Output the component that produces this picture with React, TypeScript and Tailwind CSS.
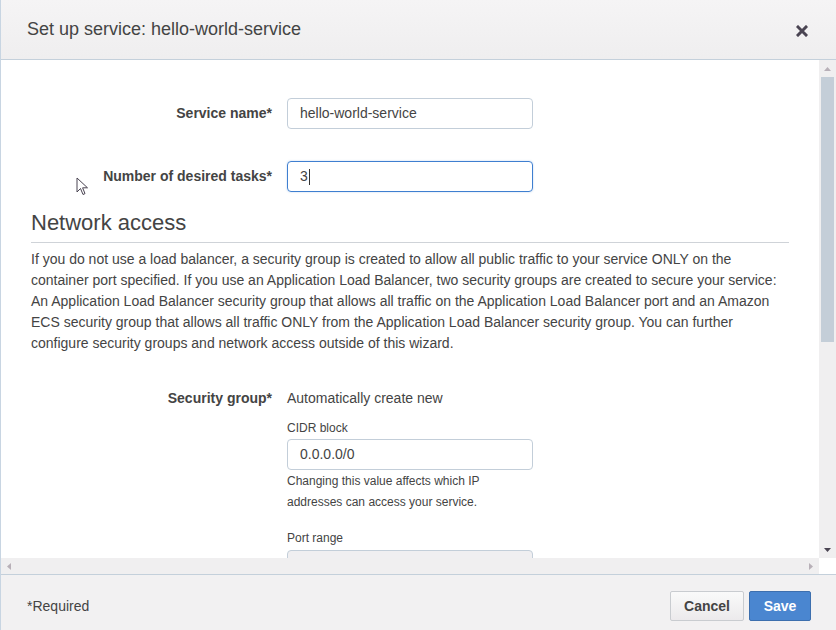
import React from "react";

const font = { fontFamily: '"Liberation Sans", Arial, Helvetica, sans-serif' };

function Label({ children }: { children: React.ReactNode }) {
  return (
    <div className="w-[256px] shrink-0 pr-[15px] text-right text-[14px] font-bold text-[#444]">
      {children}
    </div>
  );
}

export default function App() {
  return (
    <div
      className="w-[836px] h-[630px] flex flex-col bg-white border-l border-[#c8d5e2] overflow-hidden text-[#444]"
      style={font}
    >
      {/* Header */}
      <div className="h-[60px] shrink-0 flex items-center justify-between pl-[26px] pr-[28px] bg-gradient-to-b from-[#f5f4f5] to-[#efeeef] border-b border-[#c4d0db]">
        <div className="text-[18px] text-[#444]">Set up service: hello-world-service</div>
        <svg width="12" height="12" viewBox="0 0 12 12" className="mt-[2px]">
          <path d="M2 2 L10 10 M10 2 L2 10" stroke="#4a4452" strokeWidth="3" strokeLinecap="square" />
        </svg>
      </div>

      {/* Body */}
      <div className="relative h-[514px] shrink-0 flex flex-col">
        <div className="flex h-[498px]">
          <div className="relative flex-1 overflow-hidden pl-[30px] pr-[30px]">
            <div className="flex flex-col">
              <div className="flex items-center mt-[38px]">
                <Label>Service name*</Label>
                <div className="w-[246px] h-[31px] rounded-[4px] border border-[#c3ced9] flex items-center pl-[12px] text-[14px] text-[#444]">
                  hello-world-service
                </div>
              </div>
              <div className="flex items-center mt-[32px]">
                <Label>Number of desired tasks*</Label>
                <div className="w-[246px] h-[31px] rounded-[4px] border border-[#3f7fd0] shadow-[0_0_2px_rgba(63,127,208,0.35)] flex items-center pl-[12px] text-[14px] text-[#444]">
                  3<span className="inline-block w-px h-[16px] bg-[#333] ml-[1px]" />
                </div>
              </div>

              <div className="mt-[18px] text-[22px] leading-[25px] text-[#444]">Network access</div>
              <div className="mt-[7px] h-px bg-[#cfd3d8]" />
              <div className="mt-[6px] text-[14px] leading-[21px] text-[#444]">
                <div className="whitespace-nowrap">If you do not use a load balancer, a security group is created to allow all public traffic to your service ONLY on the</div>
                <div className="whitespace-nowrap">container port specified. If you use an Application Load Balancer, two security groups are created to secure your service:</div>
                <div className="whitespace-nowrap">An Application Load Balancer security group that allows all traffic on the Application Load Balancer port and an Amazon</div>
                <div className="whitespace-nowrap">ECS security group that allows all traffic ONLY from the Application Load Balancer security group. You can further</div>
                <div className="whitespace-nowrap">configure security groups and network access outside of this wizard.</div>
              </div>

              <div className="flex items-center mt-[34px] leading-[21px]">
                <Label>Security group*</Label>
                <div className="text-[14px] text-[#444]">Automatically create new</div>
              </div>
              <div className="ml-[256px] flex flex-col">
                <div className="mt-[9px] text-[12px] leading-[21px] text-[#444]">CIDR block</div>
                <div className="w-[246px] h-[31px] rounded-[4px] border border-[#c3ced9] flex items-center pl-[12px] text-[14px] text-[#444]">
                  0.0.0.0/0
                </div>
                <div className="mt-[1px] text-[12px] leading-[21px] text-[#444]">
                  <div>Changing this value affects which IP</div>
                  <div>addresses can access your service.</div>
                </div>
                <div className="mt-[15px] text-[12px] leading-[21px] text-[#444]">Port range</div>
                <div className="mt-[1px] w-[246px] h-[31px] rounded-[4px] border border-[#c3ced9] bg-[#f0eff1]" />
              </div>
            </div>

            {/* mouse cursor */}
            <svg className="absolute left-[75px] top-[117px]" width="14" height="20" viewBox="0 0 14 20">
              <path d="M1 1 L1 15 L4.5 11.5 L7 17.5 L9 16.6 L6.6 10.8 L11.5 10.8 Z" fill="#fff" stroke="#4a4452" strokeWidth="1" strokeLinejoin="miter" />
            </svg>
          </div>

          {/* vertical scrollbar */}
          <div className="w-[17px] shrink-0 bg-[#f0eff0] flex flex-col items-center">
            <div className="h-[17px] w-full flex items-center justify-center">
              <svg width="7" height="4" viewBox="0 0 7 4"><path d="M3.5 0 L7 4 L0 4 Z" fill="#b8b0b8" /></svg>
            </div>
            <div className="w-[13px] h-[265px] bg-[#c4ced8]" />
            <div className="flex-1" />
            <div className="h-[17px] w-full flex items-center justify-center">
              <svg width="7" height="4" viewBox="0 0 7 4"><path d="M0 0 L7 0 L3.5 4 Z" fill="#4a4452" /></svg>
            </div>
          </div>
        </div>

        {/* horizontal scrollbar */}
        <div className="flex h-[16px]">
          <div className="flex-1 bg-[#f0eff0] flex items-center justify-between px-[6px]">
            <svg width="4" height="7" viewBox="0 0 4 7"><path d="M4 0 L4 7 L0 3.5 Z" fill="#b8b0b8" /></svg>
            <svg width="4" height="7" viewBox="0 0 4 7"><path d="M0 0 L0 7 L4 3.5 Z" fill="#b8b0b8" /></svg>
          </div>
          <div className="w-[17px] bg-white" />
        </div>
      </div>

      {/* Footer */}
      <div className="flex-1 border-t border-[#c4d0db] bg-[#f2f1f2] flex items-center justify-between pl-[26px] pr-[25px] pt-[7px]">
        <div className="text-[14px] text-[#444]">*Required</div>
        <div className="flex items-center gap-[5px]">
          <div className="w-[74px] h-[30px] rounded-[2px] border border-[#c9ccd0] bg-gradient-to-b from-[#fafafa] to-[#eceaec] flex items-center justify-center text-[14px] font-bold text-[#444]">
            Cancel
          </div>
          <div className="w-[62px] h-[30px] rounded-[2px] border border-[#3d6fae] bg-[#4a86d0] flex items-center justify-center text-[14px] font-bold text-white">
            Save
          </div>
        </div>
      </div>
    </div>
  );
}
